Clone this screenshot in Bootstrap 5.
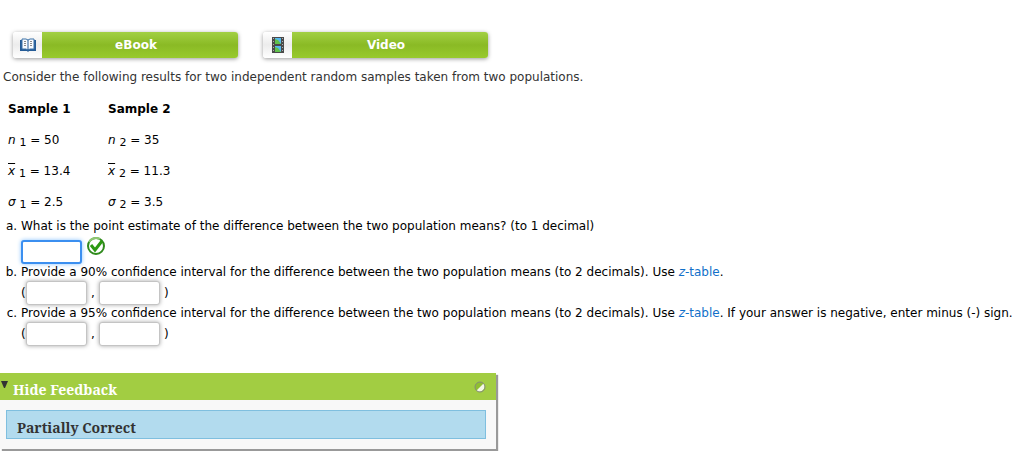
<!DOCTYPE html>
<html lang="en">
<head>
<meta charset="utf-8">
<meta name="viewport" content="width=device-width, initial-scale=1">
<title>Confidence intervals for two populations</title>
<link href="https://cdn.jsdelivr.net/npm/bootstrap@5.3.0/dist/css/bootstrap.min.css" rel="stylesheet">
<style>
  body { font: 12px/17px Verdana, "DejaVu Sans", sans-serif; color: #000; background: #fff; }
  main { padding-bottom: 2px; }
  .resources { gap: 25px; padding: 32px 13px 0; }
  .resource { width: 225px; height: 26px; padding: 0; border: 0; border-radius: 3px; overflow: hidden; font-size: 12px; line-height: 27px; font-weight: 700; color: #fff; background: #fff; box-shadow: 0 1px 4px rgba(0,0,0,.4); }
  .resource-icon { width: 29px; background: linear-gradient(#fff, #ececec 50%, #fff); }
  .resource-label { padding-right: 8px; background: linear-gradient(#a2d043, #8aba25 50%, #98ca2e); }
  .intro { margin: 11px 0 0 3px; color: #333; }
  .samples { width: 200px; margin: 8px 0 0 8px; }
  .samples th, .samples td { width: 100px; height: 31px; padding: 0; vertical-align: middle; line-height: 17px; }
  .samples sub { font-size: 11px; bottom: -2px; }
  .x-bar { text-decoration: overline; }
  .questions { padding-left: 21px; }
  .questions a { color: #1170c9; text-decoration: none; }
  .answer-row { height: 24px; align-items: center; }
  .answer-first { height: 29px; align-items: flex-end; }
  .answer { width: 61px; height: 24px; padding: 2px 4px; font-size: 12px; border: 1px solid #c4c4c4; border-radius: 3px; box-shadow: 0 0 4px rgba(0,0,0,.35); }
  .answer-active, .answer:focus { border: 2px solid #3b8ff0; box-shadow: 0 0 4px #8cc4ff; outline: 0; }
  .paren { width: 5px; }
  .comma { width: 12px; text-align: center; }
  .feedback { width: 496px; max-width: 100%; margin-top: 27px; background: #f8f8f8; box-shadow: 2px 2px 1px #999; font: 700 14px/20px Georgia, "Noto Serif", "DejaVu Serif", serif; }
  .feedback-head { height: 27px; padding: 0 10px 0 0; color: #fff; background: #a2cd42; border: 0; font: inherit; }
  .feedback-head .title { margin: 7px 0 0 4px; }
  .feedback-head .arrow { margin: 8px 0 0 1px; }
  .feedback-body { padding: 10px 10px 10px 6px; }
  .result { height: 29px; padding: 7px 10px 0; line-height: 20px; color: #333; background: #b2dbee; border: 1px solid #7fbfdf; }
</style>
</head>
<body>
<main>
  <div class="resources d-flex flex-wrap">
    <button type="button" class="resource d-flex">
      <span class="resource-icon d-flex align-items-center justify-content-center">
        <svg width="16" height="14" viewBox="0 0 16 14" aria-hidden="true">
          <path d="M0 2h2v8h5l1 1 1-1h5V2h2v11H9l-1 1-1-1H0z" fill="#245b96"/>
          <path d="M2 1h4l2 1 2-1h4v10h-4l-2 1-2-1H2z" fill="#f8fbff" stroke="#3c73a8"/>
          <path d="M8 2v10" stroke="#245b96"/>
          <path d="M4 3.500h2M4 5.500h2M4 7.500h2M10 3.500h2M10 5.500h2M10 7.500h2" stroke="#8a8a8a"/>
        </svg>
      </span>
      <span class="resource-label flex-grow-1">eBook</span>
    </button>
    <button type="button" class="resource d-flex">
      <span class="resource-icon d-flex align-items-center justify-content-center">
        <svg width="12" height="16" viewBox="0 0 12 16" aria-hidden="true">
          <path d="M0 0h12v16H0z" fill="#4a4a4a"/>
          <path d="M3 1h6v6H3zM3 9h6v6H3z" fill="#55b8f0"/>
          <path d="M3 2l3 1 3 4H3zM3 10l3 1 3 4H3z" fill="#61c14b"/>
          <path d="M1.500 1v14M10.500 1v14" stroke="#b0b0b0" stroke-dasharray="1 2"/>
        </svg>
      </span>
      <span class="resource-label flex-grow-1">Video</span>
    </button>
  </div>

  <p class="intro">Consider the following results for two independent random samples taken from two populations.</p>

  <table class="samples">
    <thead><tr><th scope="col">Sample 1</th><th scope="col">Sample 2</th></tr></thead>
    <tbody>
      <tr><td><i>n</i> <sub>1</sub> = 50</td><td><i>n</i> <sub>2</sub> = 35</td></tr>
      <tr><td><i class="x-bar">x</i> <sub>1</sub> = 13.4</td><td><i class="x-bar">x</i> <sub>2</sub> = 11.3</td></tr>
      <tr><td><i>σ</i> <sub>1</sub> = 2.5</td><td><i>σ</i> <sub>2</sub> = 3.5</td></tr>
    </tbody>
  </table>

  <ol type="a" class="questions mb-0">
    <li>
      <label for="qa">What is the point estimate of the difference between the two population means? (to 1 decimal)</label>
      <div class="answer-row answer-first d-flex">
        <input id="qa" class="answer answer-active" type="text">
        <svg class="ms-1 mb-2" width="20" height="20" viewBox="0 0 20 20" role="img" aria-label="Correct">
          <circle cx="10" cy="10" r="8" fill="#fff" stroke="#2f8a1c" stroke-width="2"/>
          <path d="M3 6a8 8 0 0 1 11-3" fill="none" stroke="#8fc773" stroke-width="2"/>
          <path d="M5 9l4 5 7-9" fill="none" stroke="#2c9912" stroke-width="3"/>
        </svg>
      </div>
    </li>
    <li>
      <span>Provide a 90% confidence interval for the difference between the two population means (to 2 decimals). Use <a href="#"><i>z</i>-table</a>.</span>
      <div class="answer-row d-flex">
        <span class="paren">(</span><input class="answer" type="text" aria-label="90% interval lower limit">
        <span class="comma">,</span><input class="answer" type="text" aria-label="90% interval upper limit">
        <span class="ms-1">)</span>
      </div>
    </li>
    <li>
      <span>Provide a 95% confidence interval for the difference between the two population means (to 2 decimals). Use <a href="#"><i>z</i>-table</a>. If your answer is negative, enter minus (-) sign.</span>
      <div class="answer-row d-flex">
        <span class="paren">(</span><input class="answer" type="text" aria-label="95% interval lower limit">
        <span class="comma">,</span><input class="answer" type="text" aria-label="95% interval upper limit">
        <span class="ms-1">)</span>
      </div>
    </li>
  </ol>

  <section class="feedback">
    <button type="button" class="feedback-head d-flex align-items-start w-100" aria-expanded="true">
      <svg class="arrow" width="8" height="8" viewBox="0 0 8 8" aria-hidden="true"><path d="M0 0h7L4 7H3z" fill="#333"/></svg>
      <span class="title">Hide Feedback</span>
      <svg class="ms-auto mt-2" width="12" height="12" viewBox="0 0 12 12" aria-hidden="true">
        <circle cx="6" cy="6" r="5" fill="#8fbf30"/>
        <path d="M9.500 2.500A5 5 0 0 1 2.500 9.500z" fill="#f4f8e8"/>
        <circle cx="6" cy="6" r="5" fill="none" stroke="#858c78"/>
      </svg>
    </button>
    <div class="feedback-body"><div class="result">Partially Correct</div></div>
  </section>
</main>
<script src="https://cdn.jsdelivr.net/npm/bootstrap@5.3.0/dist/js/bootstrap.bundle.min.js"></script>
</body>
</html>
